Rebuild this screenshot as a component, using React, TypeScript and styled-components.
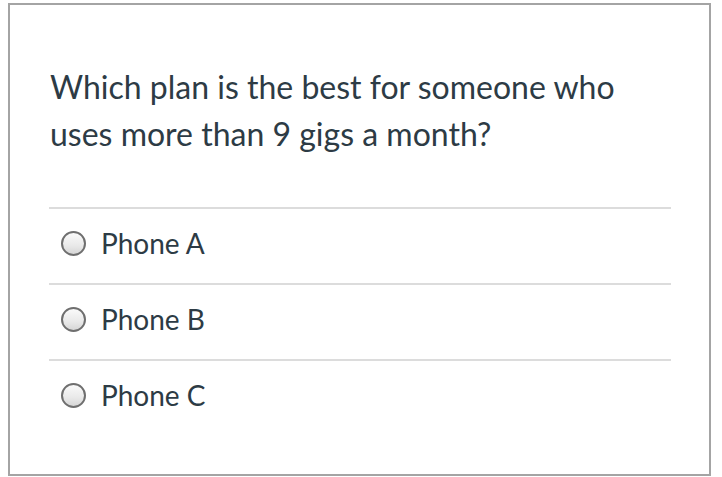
import React from "react";
import styled, { createGlobalStyle } from "styled-components";

const GlobalStyle = createGlobalStyle`
  html, body {
    margin: 0;
    padding: 0;
    background: #ffffff;
  }
  body {
    font-family: Lato, "Liberation Sans", sans-serif;
  }
`;

const Card = styled.div`
  box-sizing: border-box;
  margin: 3px 0 0 8px;
  width: 703px;
  height: 473px;
  border: 2px solid #a4a4a4;
  background: #ffffff;
  padding: 58px 38px 0 39px;
`;

const Question = styled.p`
  margin: 0 0 50px 1px;
  font-size: 32px;
  line-height: 47px;
  color: #2d3b45;
`;

const AnswerList = styled.div`
  display: flex;
  flex-direction: column;
`;

const AnswerRow = styled.label`
  box-sizing: border-box;
  display: flex;
  align-items: center;
  gap: 15px;
  height: 76px;
  padding: 0 0 6px 12px;
  border-top: 2px solid #dcdcdc;
  font-size: 28px;
  color: #2d3b45;
  cursor: pointer;
`;

const Radio = styled.span`
  box-sizing: border-box;
  width: 25px;
  height: 25px;
  border-radius: 50%;
  border: 2px solid #6f6f6f;
  background: linear-gradient(180deg, #fafafa 0%, #e9e9e9 60%, #d6d6d6 100%);
`;

const answers = ["Phone A", "Phone B", "Phone C"];

export default function App() {
  return (
    <>
      <GlobalStyle />
      <Card>
        <Question>
          Which plan is the best for someone who uses more than 9 gigs a month?
        </Question>
        <AnswerList>
          {answers.map((answer) => (
            <AnswerRow key={answer}>
              <Radio />
              {answer}
            </AnswerRow>
          ))}
        </AnswerList>
      </Card>
    </>
  );
}
